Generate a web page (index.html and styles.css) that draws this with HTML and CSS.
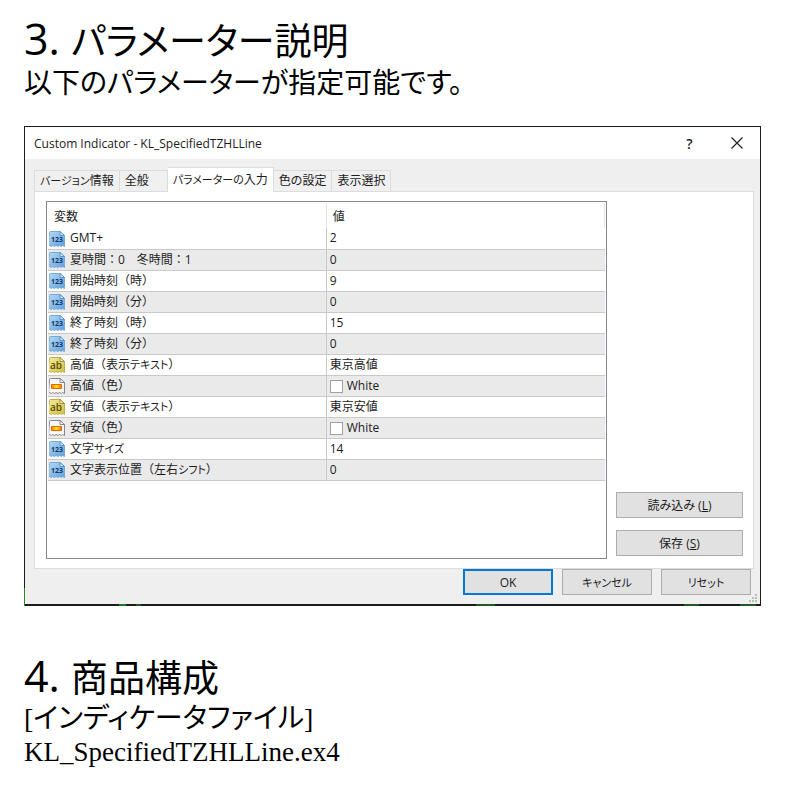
FILE: index.html
```html
<!DOCTYPE html>
<html lang="ja">
<head>
<meta charset="utf-8">
<meta name="viewport" content="width=device-width, initial-scale=1">
<title>KL_SpecifiedTZHLLine</title>
<link rel="stylesheet" href="styles.css">
</head>
<body>
<svg class="defs" aria-hidden="true">
  <defs>
    <linearGradient id="blue" x1="0" y1="0" x2="1" y2="1"><stop offset="0" stop-color="#b9dcf8"/><stop offset="1" stop-color="#5f9fdc"/></linearGradient>
    <linearGradient id="yellow" x1="0" y1="0" x2="1" y2="1"><stop offset="0" stop-color="#f3eda0"/><stop offset="1" stop-color="#d2bf48"/></linearGradient>
    <linearGradient id="orange"><stop offset="0" stop-color="#f07b10"/><stop offset=".5" stop-color="#ffe600"/><stop offset="1" stop-color="#f07b10"/></linearGradient>
    <symbol id="num" viewBox="0 0 16 16">
      <path d="M.5 1.5q0-1 1-1H11l4.500 4v11l-2-1-1 1-2-1-1.500 1-2-1-1.500 1-2-1-1 1-2-1-2 1z" fill="url(#blue)" stroke="#76a9d8"/>
      <path d="M11 .5v4h4.500z" fill="#d7ebfb" stroke="#5a94cb"/>
      <text x="8" y="11" class="icon-num">123</text>
    </symbol>
    <symbol id="str" viewBox="0 0 16 16">
      <path d="M.5 1.500q0-1 1-1H11l4.500 4v11l-2-1-1 1-2-1-1.500 1-2-1-1.500 1-2-1-1 1-2-1-2 1z" fill="url(#yellow)" stroke="#c2ae3e"/>
      <path d="M11 .5v4h4.500z" fill="#f8f4c4" stroke="#a8932f"/>
      <text x="7" y="12" class="icon-str">ab</text>
    </symbol>
    <symbol id="col" viewBox="0 0 16 16">
      <path d="M.5 1.500q0-1 1-1H11l4.500 4v11l-2-1-1 1-2-1-1.500 1-2-1-1.500 1-2-1-1 1-2-1-1 1z" fill="#f8f8f8" stroke="#85858a"/>
      <path d="M11 .5v4h4.500z" fill="#fff" stroke="#85858a"/>
      <path d="M2.500 6.500h10v4h-10z" fill="url(#orange)" stroke="#e2650c"/>
    </symbol>
  </defs>
</svg>
<main class="page">
  <section>
    <h1><span class="number">3. </span>パラメーター説明</h1>
    <p class="lead">以下のパラメーターが指定可能です。</p>
  </section>

  <section class="dialog" aria-label="Custom Indicator">
    <div class="window">
      <header class="titlebar">
        <span class="title">Custom Indicator - KL_SpecifiedTZHLLine</span>
        <button class="caption" type="button" aria-label="ヘルプ"><span>?</span></button>
        <button class="caption" type="button" aria-label="閉じる"><svg width="12" height="12" viewBox="0 0 12 12"><path d="M.5.5l11 11M11.500.5l-11 11" stroke="#222" stroke-width="1.200"/></svg></button>
      </header>
      <div class="content">
        <div class="tabs" role="tablist">
          <button type="button" role="tab"><span class="kana">バージョン</span>情報</button>
          <button type="button" role="tab" class="short">全般</button>
          <button type="button" role="tab" class="active" aria-selected="true"><span class="kana">パラメーターの</span>入力</button>
          <button type="button" role="tab">色の設定</button>
          <button type="button" role="tab">表示選択</button>
        </div>
        <div class="pane">
          <div class="list">
            <table>
              <thead><tr><th>変数</th><th>値</th></tr></thead>
              <tbody>
                <tr><td><svg class="icon"><use href="#num"/></svg>GMT+</td><td>2</td></tr>
                <tr><td><svg class="icon"><use href="#num"/></svg><span class="wide">夏時間&#65306;0&#12288;冬時間&#65306;1</span></td><td>0</td></tr>
                <tr><td><svg class="icon"><use href="#num"/></svg><span class="wide">開始時刻&#65288;時&#65289;</span></td><td>9</td></tr>
                <tr><td><svg class="icon"><use href="#num"/></svg><span class="wide">開始時刻&#65288;分&#65289;</span></td><td>0</td></tr>
                <tr><td><svg class="icon"><use href="#num"/></svg><span class="wide">終了時刻&#65288;時&#65289;</span></td><td>15</td></tr>
                <tr><td><svg class="icon"><use href="#num"/></svg><span class="wide">終了時刻&#65288;分&#65289;</span></td><td>0</td></tr>
                <tr><td><svg class="icon"><use href="#str"/></svg><span class="wide">高値&#65288;表示</span><span class="kana">テキスト</span><span class="wide">&#65289;</span></td><td>東京高値</td></tr>
                <tr><td><svg class="icon"><use href="#col"/></svg><span class="wide">高値&#65288;色&#65289;</span></td><td><span class="swatch"></span>White</td></tr>
                <tr><td><svg class="icon"><use href="#str"/></svg><span class="wide">安値&#65288;表示</span><span class="kana">テキスト</span><span class="wide">&#65289;</span></td><td>東京安値</td></tr>
                <tr><td><svg class="icon"><use href="#col"/></svg><span class="wide">安値&#65288;色&#65289;</span></td><td><span class="swatch"></span>White</td></tr>
                <tr><td><svg class="icon"><use href="#num"/></svg>文字<span class="kana">サイズ</span></td><td>14</td></tr>
                <tr><td><svg class="icon"><use href="#num"/></svg><span class="wide">文字表示位置&#65288;左右</span><span class="kana">シフト</span><span class="wide">&#65289;</span></td><td>0</td></tr>
              </tbody>
            </table>
          </div>
          <div class="side">
            <button class="btn" type="button">読み込み (<u>L</u>)</button>
            <button class="btn" type="button">保存 (<u>S</u>)</button>
          </div>
        </div>
        <footer class="actions">
          <button class="btn primary" type="button">OK</button>
          <button class="btn" type="button"><span class="kana">キャンセル</span></button>
          <button class="btn" type="button"><span class="kana">リセット</span></button>
        </footer>
      </div>
      <svg class="grip" width="8" height="8" viewBox="0 0 8 8" aria-hidden="true"><path d="M6 0h2v2H6zM3 3h2v2H3zM6 3h2v2H6zM0 6h2v2H0zM3 6h2v2H3zM6 6h2v2H6z" fill="#bcbcbc"/></svg>
    </div>
  </section>

  <section>
    <h2><span class="number">4. </span>商品構成</h2>
    <p class="files-label">[インディケータファイル]</p>
    <p class="files">KL_SpecifiedTZHLLine.ex4</p>
  </section>
</main>
</body>
</html>
```
FILE: styles.css
```css
* { box-sizing: border-box; }

body {
  margin: 0;
  background: #fff;
  color: #000;
  font-family: "Noto Sans CJK JP", sans-serif;
}

.defs { position: absolute; width: 0; height: 0; }

.page { padding: 17px 24px; }

h1, h2 {
  margin: 0 0 3px;
  font-size: 37px;
  line-height: 44px;
  font-weight: 400;
  font-feature-settings: "palt";
}

.number {
  font-family: "Open Sans", sans-serif;
  font-size: 43px;
  line-height: 24px;
  white-space: pre;
}

p { margin: 0; }

.lead {
  font-size: 28px;
  line-height: 35px;
  font-feature-settings: "palt";
}

.files-label, .files {
  font-family: "Liberation Serif", "Noto Sans CJK JP", serif;
  font-feature-settings: "palt";
}

.files-label { font-size: 28px; line-height: 35px; }

.files { font-size: 27px; line-height: 32px; }

.dialog {
  margin: 27px 0 48px;
  padding: 1px 1px 2px;
  background:
    linear-gradient(#1f7a24, #1f7a24) 95px 100% / 7px 2px no-repeat,
    linear-gradient(#1f5a24, #1f5a24) 112px 100% / 5px 2px no-repeat,
    linear-gradient(#1f5a24, #1f5a24) 452px 100% / 19px 2px no-repeat,
    linear-gradient(#1f5a24, #1f5a24) 660px 100% / 15px 2px no-repeat,
    linear-gradient(#1f5a24, #1f5a24) 716px 100% / 16px 2px no-repeat,
    linear-gradient(#2a8a2c, #2a8a2c) 0 100% / 1px 18px no-repeat,
    #1c1c20;
  font-family: "Open Sans", "Noto Sans CJK JP", sans-serif;
  font-size: 12px;
  color: #1c1c1c;
}

.window { position: relative; background: #efefef; }

.titlebar {
  display: flex;
  height: 32px;
  padding-left: 9px;
  align-items: center;
  background: #fff;
}

.title { flex: 1; }

button { font: inherit; color: inherit; padding: 0; }

.caption {
  width: 47px;
  height: 32px;
  border: 0;
  background: transparent;
  font-size: 14px;
  font-weight: 600;
}

.caption svg { display: block; margin: 0 auto; }

.content { padding: 9px 6px 9px 9px; }

.tabs {
  display: flex;
  align-items: flex-end;
  height: 23px;
  font-feature-settings: "palt";
}

.tabs button {
  height: 21px;
  padding: 0 5px;
  border: 1px solid #dcdcdc;
  border-width: 1px 1px 0 0;
  background: #f0f0f0;
  line-height: 20px;
  white-space: nowrap;
}

.tabs button:first-child { border-left-width: 1px; }

.tabs .short { padding-right: 18px; }

.tabs .active {
  height: 25px;
  margin-bottom: -1px;
  background: #fff;
  position: relative;
}

.kana { font-size: 11px; }

.pane {
  display: flex;
  gap: 9px;
  padding: 9px 10px 9px 11px;
  border: 1px solid #dcdcdc;
  background: #fff;
}

.list {
  flex: 1;
  height: 358px;
  border: 1px solid #828790;
  padding: 1px;
}

table { width: 100%; border-collapse: collapse; table-layout: fixed; }

th {
  height: 25px;
  padding: 0 6px;
  border-right: 1px solid #e5e5e5;
  text-align: left;
  font-weight: 400;
}

th:first-child { width: 50%; }

td {
  height: 21px;
  padding: 0 3px;
  border-bottom: 1px solid #c9c9c9;
  line-height: 18px;
  white-space: nowrap;
}

td:first-child { padding-left: 1px; border-right: 1px solid #c9c9c9; font-feature-settings: "palt"; }

tbody tr:nth-child(even) { background: #eaeaea; }

.wide { font-feature-settings: normal; }

.icon { width: 16px; height: 16px; margin-right: 5px; vertical-align: middle; }

.icon-num { font: 700 7px "Open Sans", sans-serif; fill: #123a66; text-anchor: middle; }

.icon-str { font: 600 10px "Open Sans", sans-serif; fill: #5b4a00; text-anchor: middle; }

.swatch {
  display: inline-block;
  width: 13px;
  height: 13px;
  margin-right: 4px;
  border: 1px solid #a0a0a0;
  background: #fff;
  vertical-align: middle;
}

.side {
  display: flex;
  flex-direction: column;
  justify-content: flex-end;
  gap: 12px;
  width: 127px;
  padding-bottom: 3px;
}

.btn {
  height: 26px;
  border: 1px solid #adadad;
  background: #e1e1e1;
  font-feature-settings: "palt";
}

.primary { border: 2px solid #0078d7; }

.actions {
  display: flex;
  justify-content: flex-end;
  gap: 9px;
  padding-right: 3px;
}

.actions .btn { width: 90px; }

.grip { position: absolute; right: 3px; bottom: 2px; }
```
